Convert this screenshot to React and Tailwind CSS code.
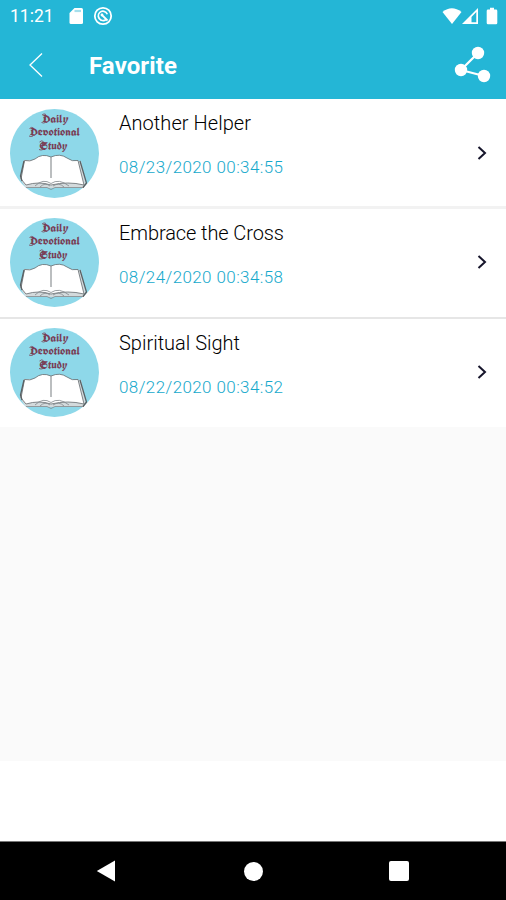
import React from 'react';

const favorites = [
    { id: 1, title: "Another Helper", date: "08/23/2020 00:34:55", row: "h-[107px] pt-[10px]", text: "", divider: "h-[3px] bg-[#f2f2f2]", titleWidth: 132 },
    { id: 2, title: "Embrace the Cross", date: "08/24/2020 00:34:58", row: "h-[108px] pt-[9px]", text: "pt-px", divider: "h-[2px] bg-[#e6e6e6]", titleWidth: 165 },
    { id: 3, title: "Spiritual Sight", date: "08/22/2020 00:34:52", row: "h-[108px] pt-[9px]", text: "pt-px", divider: "", titleWidth: 121 },
];

const StatusBar = () => (
    <div className="flex h-8 items-center pl-[10px] pr-2 text-white">
        <span className="w-[59px] text-[17.5px] leading-5">11:21</span>
        <svg width="15" height="18" viewBox="0 0 15 18" fill="currentColor" className="mr-[9px]">
            <path d="M5.5 1H12.5Q14 1 14 2.500V15.500Q14 17 12.500 17H2Q.5 17 .5 15.500V6Z" />
            <path d="M5.500 4H12" stroke="#a5dfec" strokeWidth="2.200" />
        </svg>
        <svg width="20" height="20" viewBox="0 0 20 20" fill="none" stroke="currentColor">
            <circle cx="10" cy="10" r="8.200" strokeWidth="1.800" />
            <path d="M8 14.200A4.700 4.700 0 1 1 14.300 8.200M5.500 10.500A4.700 4.700 0 0 0 13 13.600" strokeWidth="1.700" />
            <path d="M8.300 8.300L14.500 14.500" strokeWidth="1.900" />
            <circle cx="9" cy="9" r="1.400" fill="currentColor" stroke="none" />
        </svg>
        <div className="ml-auto flex items-center">
            <svg width="20" height="18" viewBox="0 0 20 18" fill="currentColor">
                <path d="M.5 5Q9.800-2.500 19.500 5L10 17Z" />
            </svg>
            <svg width="17" height="18" viewBox="0 0 17 18" className="mr-[7px]">
                <path fillRule="evenodd" fill="currentColor" d="M16 1V17H0ZM9.500 10V15.300H14.300V5Z" />
            </svg>
            <svg width="12" height="18" viewBox="0 0 12 18" fill="currentColor">
                <path d="M4 .8h4v1.800h2q1.300 0 1.300 1.300v12q0 1.300-1.300 1.300H2Q.7 17.200.7 15.900v-12Q.7 2.600 2 2.600h2Z" />
            </svg>
        </div>
    </div>
);

const Header = () => (
    <div className="flex h-[66px] items-center text-white">
        <button className="flex w-[89px] pl-7" aria-label="Back">
            <svg width="16" height="26" viewBox="0 0 16 26" fill="none" stroke="currentColor" strokeWidth="1.300">
                <path d="M14 1.500L2 13L14 24.500" />
            </svg>
        </button>
        <h1 className="pt-0.5 text-[24px] font-bold leading-7 tracking-[0.1px]">Favorite</h1>
        <button className="ml-auto pr-[14px]" aria-label="Share">
            <svg width="38" height="38" viewBox="0 0 38 38" fill="currentColor">
                <path d="M24 7L7 24L30 30" fill="none" stroke="currentColor" strokeWidth="2.200" />
                <circle cx="24" cy="7" r="6.200" />
                <circle cx="7" cy="24" r="6.200" />
                <circle cx="30" cy="30" r="6.200" />
            </svg>
        </button>
    </div>
);

const Logo = () => (
    <svg width="89" height="89" viewBox="0 0 89 89" className="shrink-0">
        <circle cx="44.500" cy="44.500" r="44.500" fill="#8ed8e9" />
        <g
            fill="#793d55"
            fontFamily="UnifrakturCook, Old English Text MT, Liberation Serif, serif"
            fontWeight="bold"
            fontSize="11"
            textAnchor="middle"
        >
            <text x="45.500" y="13.500" textLength="26" lengthAdjust="spacingAndGlyphs">Daily</text>
            <text x="45" y="27" textLength="50" lengthAdjust="spacingAndGlyphs">Devotional</text>
            <text x="43.500" y="40.500" textLength="28" lengthAdjust="spacingAndGlyphs">Study</text>
        </g>
        {/* initials get the double stems and flourishes of blackletter capitals */}
        <path
            d="M35 6v7M32 6q2-2 4-.5M31.500 13.500q2 1 4 0M22.500 19.500v7M19.500 19.500q2-2 4-.5M19 27q2 1 4 0M32.500 33v7M29.500 33q2-2 4-.5M29 40.500q2 1 4 0"
            fill="none"
            stroke="#793d55"
            strokeWidth=".8"
        />
        <path d="M14 51L10 70L16 79H73L76 76L71 52Z" fill="#d3dadc" />
        <path
            d="M14.500 51.500Q20 53 25 50Q32 44 41 48Q50 44 57 49Q62 53 68 51.500L74 76Q58 72 41 76Q29 72 16 76L11 70Z"
            fill="#fff"
            stroke="#646b6e"
            strokeWidth=".8"
        />
        <path d="M41 48V69" stroke="#83898b" strokeWidth="1.100" />
        <path
            d="M25 77Q33 69 41 74.500Q49 69 59 77M30 78Q35 73 40 77M43 77Q49 73 54 78M16 78.500H37L41 80.500L45 78.500H74"
            fill="none"
            stroke="#82888b"
            strokeWidth=".8"
        />
        <path d="M14 52L10.500 67L12 72M70 52L76.500 74L73 78.500" fill="none" stroke="#596164" strokeWidth="1.300" />
    </svg>
);

const FavoriteItem = ({ item }) => (
    <>
        <li className={`flex items-start bg-white pl-[10px] pr-[18px] ${item.row}`}>
            <Logo />
            <div className={`ml-5 flex-1 ${item.text}`}>
                <svg width="190" height="26" className="block overflow-visible">
                    <text x="0" y="21" fontSize="20" fontWeight="300" fill="#000" textLength={item.titleWidth}>{item.title}</text>
                </svg>
                <p className="mt-5 text-[17px] font-light leading-6 tracking-[0.4px] text-[#16a9cc]">{item.date}</p>
            </div>
            <svg width="12" height="16" viewBox="0 0 12 16" fill="none" stroke="#16152b" strokeWidth="2" className="mt-9">
                <path d="M2.500 2L9 8L2.500 14" />
            </svg>
        </li>
        {item.divider && <li className={item.divider} />}
    </>
);

const NavigationBar = () => (
    <div className="flex h-[59px] items-center border-t border-[#777] bg-black pl-[96px] text-white">
        <svg width="20" height="22" viewBox="0 0 20 22" fill="currentColor">
            <path d="M19 .5V21.500L.8 11Z" />
        </svg>
        <div className="ml-[128px] size-[19px] rounded-full bg-white" />
        <div className="ml-[126px] size-5 rounded-[2px] bg-white" />
    </div>
);

const App = () => {
    return (
        <div className="flex h-[900px] w-[506px] flex-col overflow-hidden bg-white font-['Roboto',sans-serif]">
            <header className="h-[99px] shrink-0 bg-[#24b6d6]">
                <StatusBar />
                <Header />
            </header>
            <main className="flex-1 bg-white">
                <div className="h-[662px] bg-[#fafafa]">
                    <ul>
                        {favorites.map((item) => (
                            <FavoriteItem key={item.id} item={item} />
                        ))}
                    </ul>
                </div>
            </main>
            <NavigationBar />
        </div>
    );
};

export default App;
